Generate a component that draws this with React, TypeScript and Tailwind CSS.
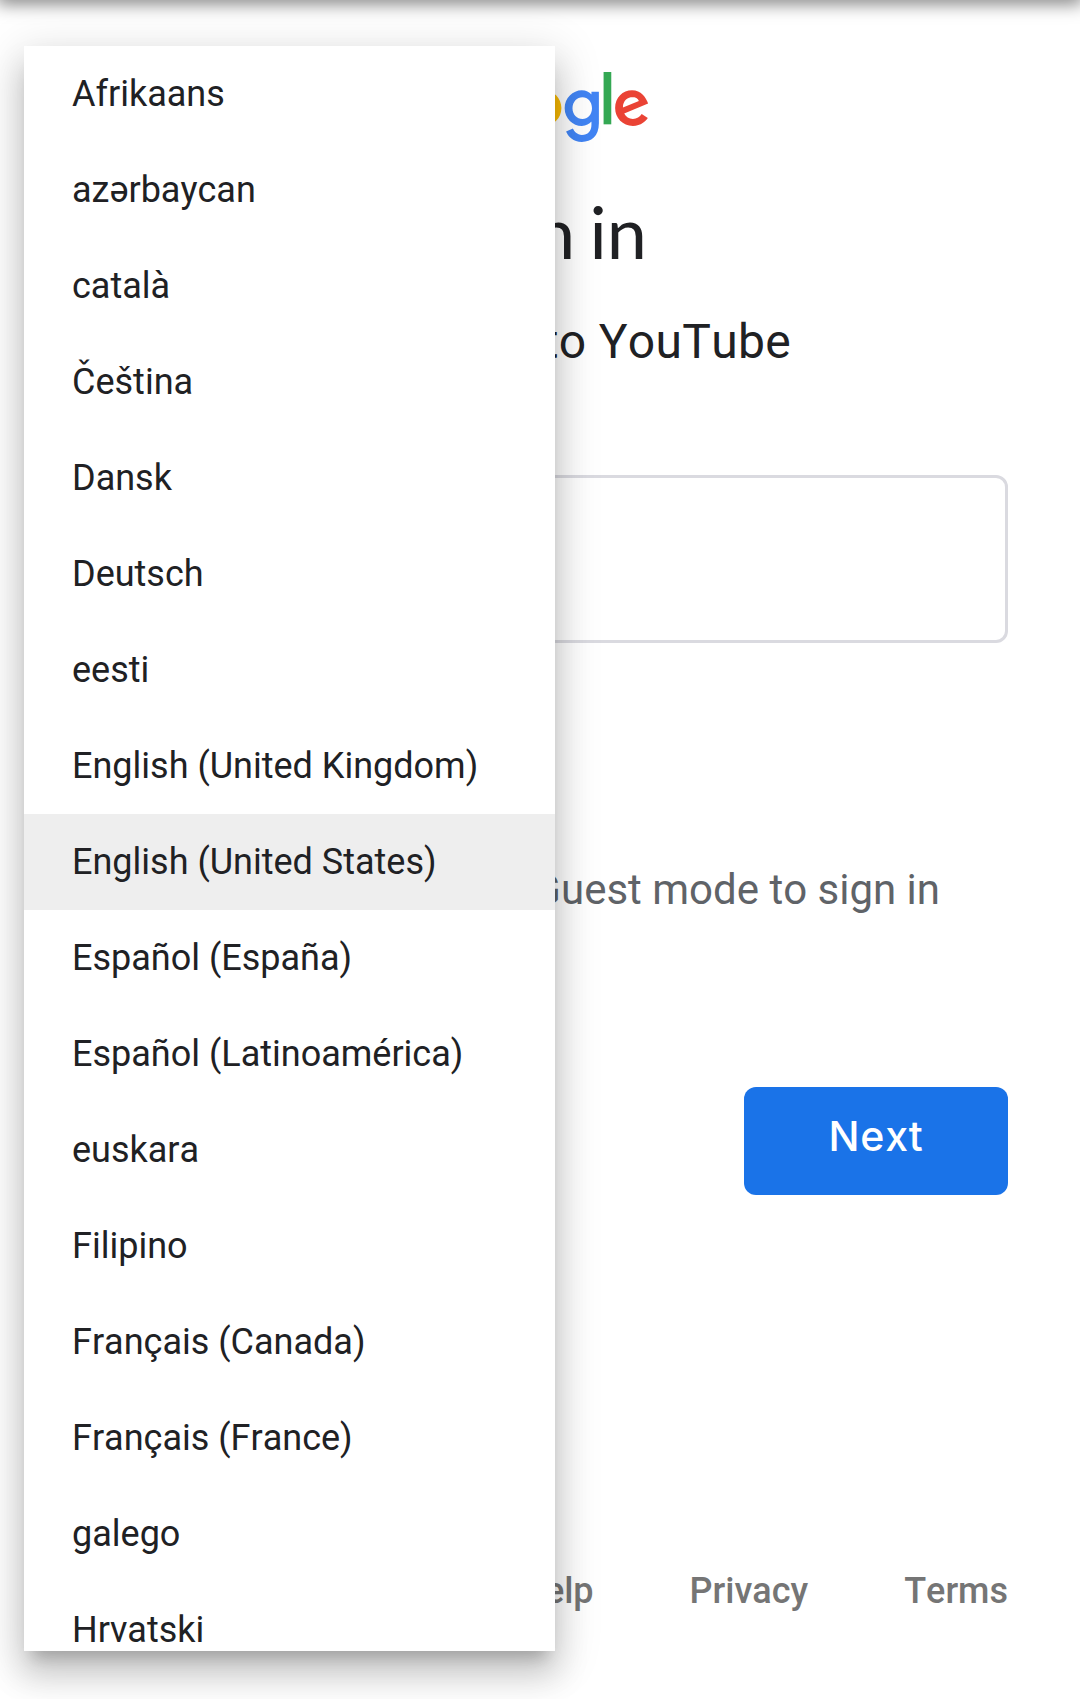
const languages = [
  'Afrikaans', 'azərbaycan', 'català', 'Čeština', 'Dansk', 'Deutsch', 'eesti',
  'English (United Kingdom)', 'English (United States)', 'Español (España)',
  'Español (Latinoamérica)', 'euskara', 'Filipino', 'Français (Canada)',
  'Français (France)', 'galego', 'Hrvatski',
];

function Logo() {
  return (
    <svg viewBox="0 0 75 24" className="ml-[429px] h-[72px] w-[225px]" aria-label="Google">
      <path fill="#ea4335" d="M67.954 16.303c-1.33 0-2.278-.608-2.886-1.804l7.967-3.3-.27-.68c-.495-1.33-2.008-3.79-5.102-3.79-3.068 0-5.622 2.41-5.622 5.96 0 3.34 2.53 5.96 5.92 5.96 2.73 0 4.31-1.67 4.97-2.64l-2.03-1.35c-.673.98-1.6 1.64-2.93 1.64zm-.203-7.27c1.04 0 1.92.52 2.21 1.264l-5.32 2.21c-.06-2.3 1.79-3.474 3.12-3.474z" />
      <path fill="#34a853" d="M58.193.67h2.564v17.44h-2.564z" />
      <path fill="#4285f4" d="M54.152 8.066h-.088c-.588-.697-1.716-1.33-3.136-1.33-2.98 0-5.71 2.614-5.71 5.98 0 3.338 2.73 5.933 5.71 5.933 1.42 0 2.548-.64 3.136-1.36h.088v.86c0 2.28-1.217 3.5-3.183 3.5-1.61 0-2.6-1.15-3-2.12l-2.28.94c.65 1.58 2.39 3.52 5.28 3.52 3.06 0 5.66-1.807 5.66-6.206V7.21h-2.48v.858zm-3.006 8.237c-1.804 0-3.318-1.513-3.318-3.588 0-2.1 1.514-3.635 3.318-3.635 1.784 0 3.183 1.534 3.183 3.635 0 2.075-1.4 3.588-3.19 3.588z" />
      <path fill="#fbbc05" d="M38.17 6.735c-3.28 0-5.953 2.506-5.953 5.96 0 3.432 2.673 5.96 5.954 5.96 3.29 0 5.96-2.528 5.96-5.96 0-3.46-2.67-5.96-5.95-5.96zm0 9.568c-1.798 0-3.348-1.487-3.348-3.61 0-2.14 1.55-3.608 3.35-3.608s3.348 1.467 3.348 3.61c0 2.116-1.55 3.608-3.35 3.608z" />
    </svg>
  );
}

function LanguageMenu() {
  return (
    <ul className="absolute left-6 top-[46px] h-[1605px] w-[531px] overflow-hidden bg-white shadow-[0_24px_30px_3px_rgba(0,0,0,0.14),0_9px_42px_6px_rgba(0,0,0,0.12),0_15px_15px_-9px_rgba(0,0,0,0.2)]">
      {languages.map((name) => (
        <li
          key={name}
          className={
            name === 'English (United States)'
              ? 'flex h-24 items-center whitespace-nowrap bg-[#eeeeee] px-12 text-[36px]'
              : 'flex h-24 items-center whitespace-nowrap px-12 text-[36px]'
          }
        >
          {name}
        </li>
      ))}
    </ul>
  );
}

export default function App() {
  return (
    <div className="relative h-[1699px] w-[1080px] overflow-hidden bg-white font-[Roboto,sans-serif] text-[#202124] [font-kerning:none]">
      <div className="absolute -top-3 left-0 h-3 w-full shadow-[0_0_18px_3px_rgba(0,0,0,0.55)]" />
      <main className="flex h-full flex-col pt-[70px]">
        <Logo />
        <h1 className="mt-[41px] pr-[433px] text-right font-[Lato,sans-serif] text-[72px] leading-[96px] [word-spacing:-4px]">Sign in</h1>
        <p className="mt-[27px] pr-[289px] text-right text-[48px] leading-[72px] tracking-[0.3px]">to continue to YouTube</p>
        <div className="mx-[72px] mt-[97px] h-[168px] rounded-[12px] border-[3px] border-[#dadae0]" />
        <p className="mt-[217px] whitespace-nowrap pr-[140px] text-right text-[42px] leading-[60px] text-[#5f6368]">Use Guest mode to sign in</p>
        <div className="mt-[167px] flex justify-end pr-[72px]">
          <button className="flex h-[108px] w-[264px] justify-center rounded-[12px] bg-[#1a73e8] pt-[25px] font-[Inter,sans-serif] text-[41px] font-medium leading-[48px] tracking-[0.75px] text-white">Next</button>
        </div>
        <footer className="mt-[372px] flex justify-end gap-24 pr-[72px] text-[36px] font-medium leading-[48px] text-[#757575]">
          <span>Help</span>
          <span>Privacy</span>
          <span>Terms</span>
        </footer>
      </main>
      <LanguageMenu />
    </div>
  );
}
